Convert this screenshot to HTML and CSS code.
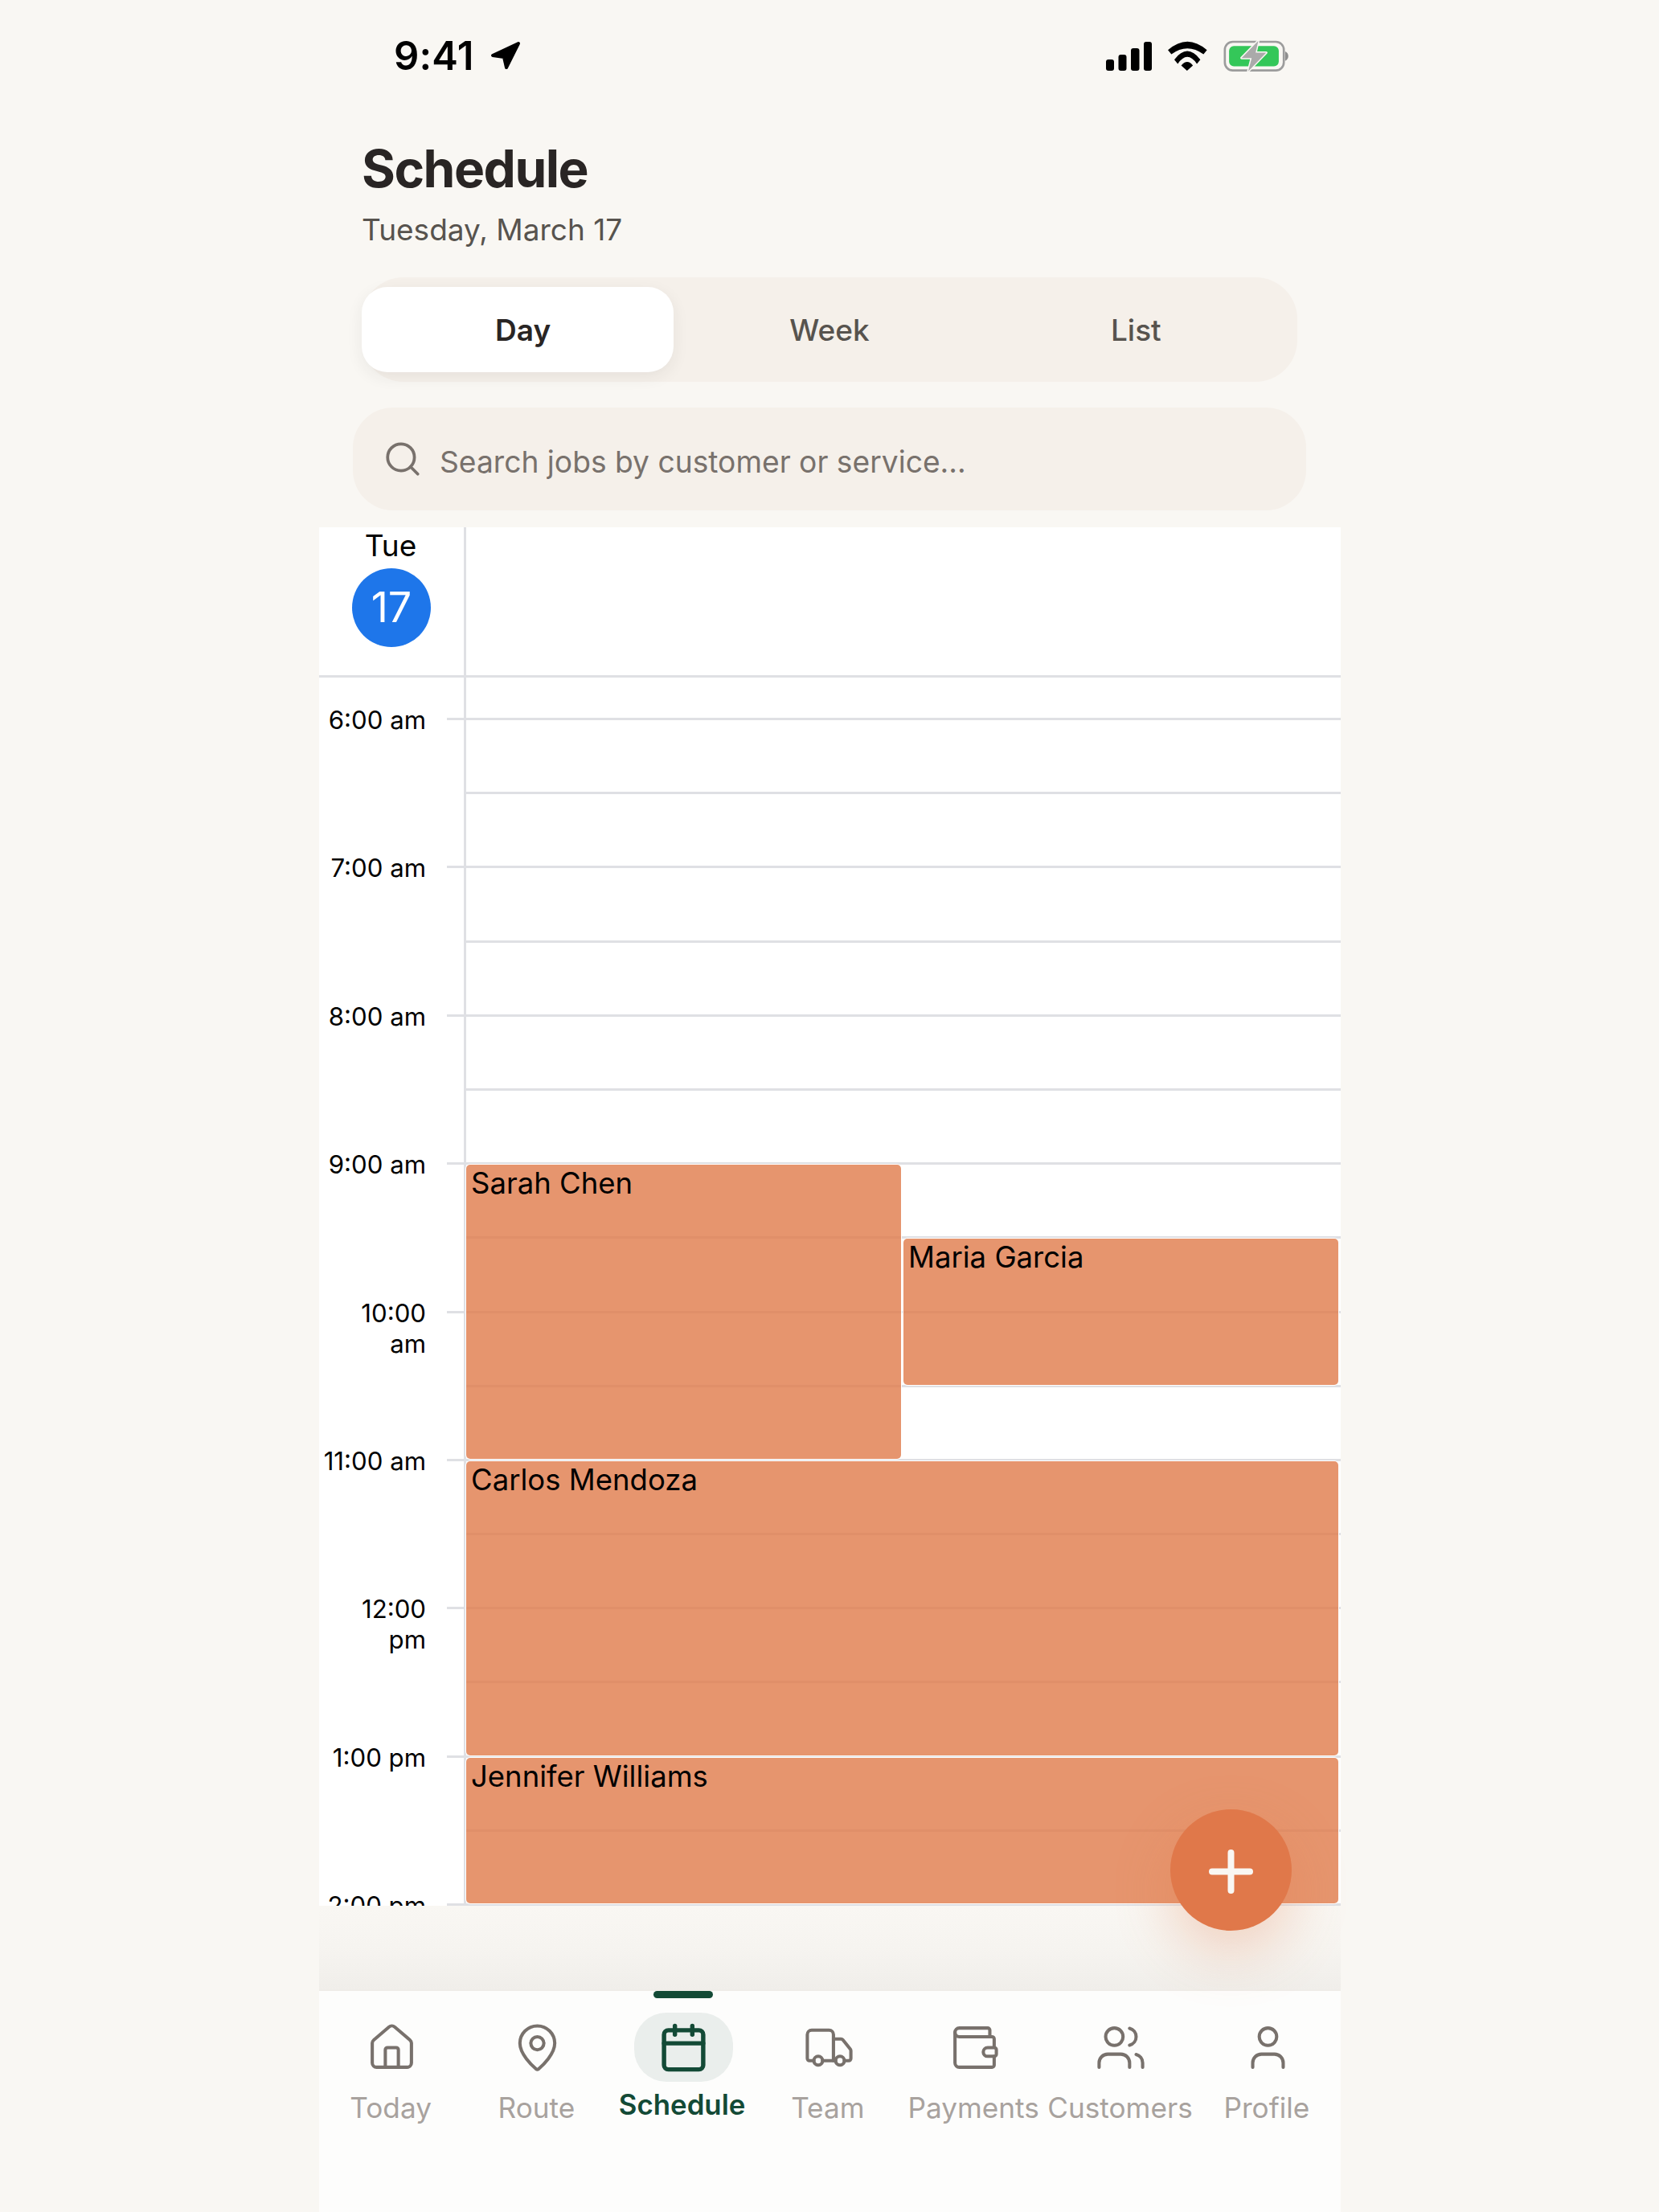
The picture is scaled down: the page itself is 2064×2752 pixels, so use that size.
FILE: index.html
```html
<!DOCTYPE html>
<html lang="en">
<head>
    <meta charset="UTF-8">
    <title>Schedule</title>
    <link rel="stylesheet" href="styles.css">
</head>
<body>
    <div class="phone">
        <div class="status-bar">
            <div class="status-left">
                <span class="clock">9:41</span>
                <svg class="arrow" viewBox="0 0 38 36"><path d="M35 3 3 18l14 2 3 13z"/></svg>
            </div>
            <div class="status-right">
                <svg class="signal" viewBox="0 0 57 36">
                    <rect x="0" y="22" width="10" height="14" rx="3"/>
                    <rect x="15.500" y="16" width="10" height="20" rx="3"/>
                    <rect x="31" y="8" width="10.500" height="28" rx="3"/>
                    <rect x="47" y="0" width="10" height="36" rx="3"/>
                </svg>
                <svg class="wifi" viewBox="338 90 148 112">
                    <path d="M338 124Q411 60 485 124L472 140Q411 96 351 140Z"/>
                    <path d="M362 160Q411 96 460 160L447 176Q411 124 375 176Z"/>
                    <path d="M388 182Q411 155 432 182L410 202Z"/>
                </svg>
                <svg class="battery" viewBox="545 88 245 118">
                    <rect class="battery-case" x="549" y="94" width="222" height="108" rx="30"/>
                    <rect class="battery-level" x="565" y="110" width="187" height="76" rx="18"/>
                    <path class="battery-nub" d="M776 130c8 3 12 10 12 18s-4 15-12 18z"/>
                    <path class="battery-bolt" d="M675 90 612 155h38l-13 50 68-70h-40z"/>
                </svg>
            </div>
        </div>

        <header class="page-head">
            <h1>Schedule</h1>
            <p>Tuesday, March 17</p>
        </header>

        <div class="view-tabs">
            <div class="tab-pill"></div>
            <div class="tab active">Day</div>
            <div class="tab">Week</div>
            <div class="tab">List</div>
        </div>

        <div class="search-box">
            <svg class="search-icon" viewBox="0 0 24 24"><circle cx="11" cy="11" r="8"/><path d="m21 21-4.300-4.300"/></svg>
            <span>Search jobs by customer or service...</span>
        </div>

        <div class="calendar">
            <div class="cal-head">
                <div class="day-cell">
                    <div class="day-name">Tue</div>
                    <div class="day-num">17</div>
                </div>
            </div>
            <div class="cal-body">
                <div class="vline"></div>

                <div class="lane first"></div>

                <div class="time r2"><span>6:00 am</span><i></i></div><div class="lane r2"></div>
                <div class="lane r3"></div>
                <div class="time r4"><span>7:00 am</span><i></i></div><div class="lane r4"></div>
                <div class="lane r5"></div>
                <div class="time r6"><span>8:00 am</span><i></i></div><div class="lane r6"></div>
                <div class="lane r7"></div>
                <div class="time r8"><span>9:00 am</span><i></i></div><div class="lane r8"></div>
                <div class="lane r9"></div>
                <div class="time r10"><span>10:00<br>am</span><i></i></div><div class="lane r10"></div>
                <div class="lane r11"></div>
                <div class="time r12"><span>11:00 am</span><i></i></div><div class="lane r12"></div>
                <div class="lane r13"></div>
                <div class="time r14"><span>12:00<br>pm</span><i></i></div><div class="lane r14"></div>
                <div class="lane r15"></div>
                <div class="time r16"><span>1:00 pm</span><i></i></div><div class="lane r16"></div>
                <div class="lane r17"></div>
                <div class="time r18"><span>2:00 pm</span><i></i></div><div class="lane r18"></div>

                <div class="event sarah">Sarah Chen</div>
                <div class="event maria">Maria Garcia</div>
                <div class="event carlos">Carlos Mendoza</div>
                <div class="event jennifer">Jennifer Williams</div>
            </div>
        </div>

        <div class="nav-fade"></div>

        <button class="fab">
            <svg viewBox="0 0 55 55"><path d="M27.500 4v47M4 27.500h47"/></svg>
        </button>

        <nav class="tabbar">
            <div class="nav-item">
                <div class="nav-icon">
                    <svg viewBox="0 0 24 24"><path d="M15 21v-8a1 1 0 0 0-1-1h-4a1 1 0 0 0-1 1v8"/><path d="M3 10a2 2 0 0 1 .709-1.528l7-5.999a2 2 0 0 1 2.582 0l7 5.999A2 2 0 0 1 21 10v9a2 2 0 0 1-2 2H5a2 2 0 0 1-2-2z"/></svg>
                </div>
                <span>Today</span>
            </div>
            <div class="nav-item">
                <div class="nav-icon">
                    <svg viewBox="0 0 24 24"><path d="M20 10c0 4.993-5.539 10.193-7.399 11.799a1 1 0 0 1-1.202 0C9.539 20.193 4 14.993 4 10a8 8 0 0 1 16 0"/><circle cx="12" cy="10" r="3"/></svg>
                </div>
                <span>Route</span>
            </div>
            <div class="nav-item active">
                <div class="nav-mark"></div>
                <div class="nav-icon">
                    <svg viewBox="0 0 24 24"><path d="M8 2v4"/><path d="M16 2v4"/><rect width="18" height="18" x="3" y="4" rx="2"/><path d="M3 10h18"/></svg>
                </div>
                <span>Schedule</span>
            </div>
            <div class="nav-item">
                <div class="nav-icon">
                    <svg viewBox="0 0 24 24"><path d="M14 18V6a2 2 0 0 0-2-2H4a2 2 0 0 0-2 2v11a1 1 0 0 0 1 1h2"/><path d="M15 18H9"/><path d="M19 18h2a1 1 0 0 0 1-1v-3.650a1 1 0 0 0-.22-.624l-3.480-4.350A1 1 0 0 0 17.520 8H14"/><circle cx="17" cy="18" r="2"/><circle cx="7" cy="18" r="2"/></svg>
                </div>
                <span>Team</span>
            </div>
            <div class="nav-item">
                <div class="nav-icon">
                    <svg viewBox="0 0 24 24"><path d="M19 7V4a1 1 0 0 0-1-1H5a2 2 0 0 0 0 4h15a1 1 0 0 1 1 1v4h-3a2 2 0 0 0 0 4h3a1 1 0 0 0 1-1v-2a1 1 0 0 0-1-1"/><path d="M3 5v14a2 2 0 0 0 2 2h15a1 1 0 0 0 1-1v-4"/></svg>
                </div>
                <span>Payments</span>
            </div>
            <div class="nav-item">
                <div class="nav-icon">
                    <svg viewBox="0 0 24 24"><path d="M16 21v-2a4 4 0 0 0-4-4H6a4 4 0 0 0-4 4v2"/><circle cx="9" cy="7" r="4"/><path d="M22 21v-2a4 4 0 0 0-3-3.870"/><path d="M16 3.130a4 4 0 0 1 0 7.750"/></svg>
                </div>
                <span>Customers</span>
            </div>
            <div class="nav-item">
                <div class="nav-icon">
                    <svg viewBox="0 0 24 24"><path d="M19 21v-2a4 4 0 0 0-4-4H9a4 4 0 0 0-4 4v2"/><circle cx="12" cy="7" r="4"/></svg>
                </div>
                <span>Profile</span>
            </div>
        </nav>
    </div>
</body>
</html>
```

FILE: styles.css
```css
* {
    box-sizing: border-box;
}
body {
    margin: 0;
    background-color: #f9f7f3;
    font-family: Inter, "Liberation Sans", sans-serif;
    color: #292524;
}
.phone {
    position: relative;
    width: 1271px;
    height: 2752px;
    margin-left: 397px;
}

/* status bar */
.status-bar {
    height: 130px;
    padding: 50px 64px 0 93px;
    display: flex;
    justify-content: space-between;
    align-items: flex-start;
}
.status-left {
    display: flex;
    align-items: center;
    gap: 20px;
    height: 38px;
}
.clock {
    font-size: 49px;
    font-weight: 600;
    color: #000;
    letter-spacing: 0.2px;
}
.arrow {
    width: 38px;
    height: 36px;
    fill: #000;
    stroke: #000;
    stroke-width: 4;
    stroke-linejoin: round;
}
.status-right {
    display: flex;
    align-items: center;
    gap: 20px;
}
.signal {
    width: 57px;
    height: 36px;
}
.wifi {
    width: 49px;
    height: 37px;
}
.battery {
    width: 82px;
    height: 39px;
}
.battery-case {
    fill: none;
    stroke: #9c9c9c;
    stroke-width: 8;
}
.battery-level {
    fill: #34c759;
}
.battery-nub {
    fill: #8e8e8e;
}
.battery-bolt {
    fill: #aaaaaa;
    stroke: #f9f7f3;
    stroke-width: 9;
    paint-order: stroke;
    stroke-linejoin: round;
}

/* heading */
.page-head {
    padding: 40px 0 0 53px;
}
.page-head h1 {
    margin: 0;
    font-size: 64px;
    line-height: 80px;
    font-weight: 700;
    letter-spacing: -1.500px;
}
.page-head p {
    margin: 11px 0 0;
    font-size: 37px;
    line-height: 50px;
    color: #57534e;
}

/* Day / Week / List */
.view-tabs {
    position: relative;
    display: flex;
    width: 1164px;
    height: 130px;
    margin: 34px 0 0 53px;
    padding: 0 10px;
    background-color: #f5f0ea;
    border-radius: 52px;
}
.tab-pill {
    position: absolute;
    left: 0;
    top: 12px;
    width: 388px;
    height: 106px;
    background-color: #fff;
    border-radius: 32px;
    box-shadow: 0 6px 20px rgba(41, 37, 36, 0.07);
}
.tab {
    position: relative;
    flex: 1;
    display: flex;
    align-items: center;
    justify-content: center;
    font-size: 37px;
    font-weight: 500;
    color: #57534e;
}
.tab.active {
    font-weight: 600;
    color: #292524;
}

.search-box {
    display: flex;
    align-items: center;
    gap: 21px;
    width: 1186px;
    height: 128px;
    margin: 32px 0 0 42px;
    padding: 0 0 0 37px;
    background-color: #f5f0ea;
    border-radius: 50px;
    font-size: 37.200px;
    color: #78716c;
}
.search-box span {
    margin-top: 7px;
}
.search-icon {
    width: 50px;
    height: 50px;
    fill: none;
    stroke: #78716c;
    stroke-width: 1.800;
    stroke-linecap: round;
    stroke-linejoin: round;
}

/* calendar */
.calendar {
    height: 1715px;
    margin-top: 21px;
    background-color: #fff;
    overflow: hidden;
    color: #000;
}
.cal-head {
    height: 187px;
    border-bottom: 3px solid #dfe0e4;
}
.day-cell {
    width: 183px;
    height: 184px;
    border-right: 3px solid #dfe0e4;
    padding: 1px 2px 0 0;
    text-align: center;
}
.day-name {
    font-size: 37px;
    line-height: 44px;
}
.day-num {
    width: 98px;
    height: 98px;
    margin: 6px 0 0 41px;
    border-radius: 50%;
    background-color: #1e76ea;
    color: #fff;
    font-size: 52px;
    line-height: 98px;
}
.cal-body {
    display: grid;
    grid-template-columns: 180px 3px 1fr 1fr 3px;
    grid-template-rows: 50px repeat(17, 92.200px);
}
.vline {
    grid-column: 2;
    grid-row: 1 / -1;
    background-color: #dfe0e4;
}
.lane {
    grid-column: 2 / -1;
    border-top: 3px solid #dfe0e4;
}
.lane.first {
    grid-row: 1;
    border-top: none;
}
.time {
    grid-column: 1;
    display: flex;
    justify-content: flex-end;
    align-items: flex-start;
    text-align: right;
    font-size: 31.200px;
    line-height: 38px;
}
.time span {
    margin: -16px 26px 0 0;
    white-space: nowrap;
}
.time i {
    width: 21px;
    border-top: 3px solid #dfe0e4;
}
.r2 { grid-row: 2; }
.r3 { grid-row: 3; }
.r4 { grid-row: 4; }
.r5 { grid-row: 5; }
.r6 { grid-row: 6; }
.r7 { grid-row: 7; }
.r8 { grid-row: 8; }
.r9 { grid-row: 9; }
.r10 { grid-row: 10; }
.r11 { grid-row: 11; }
.r12 { grid-row: 12; }
.r13 { grid-row: 13; }
.r14 { grid-row: 14; }
.r15 { grid-row: 15; }
.r16 { grid-row: 16; }
.r17 { grid-row: 17; }
.r18 { grid-row: 18; }

.event {
    z-index: 1;
    margin: 3px 0 0 0;
    padding: 1px 6px;
    background-color: rgba(224, 122, 74, 0.8);
    border-radius: 5px;
    box-shadow: 0 0 0 1px #fff;
    font-size: 36.500px;
    line-height: 44px;
}
.sarah {
    grid-column: 3;
    grid-row: 8 / 12;
    margin-right: 1.500px;
}
.maria {
    grid-column: 4;
    grid-row: 9 / 11;
    margin-left: 1.500px;
}
.carlos {
    grid-column: 3 / 5;
    grid-row: 12 / 16;
}
.jennifer {
    grid-column: 3 / 5;
    grid-row: 16 / 18;
}

/* bottom */
.nav-fade {
    height: 104px;
    background: linear-gradient(#f9f7f3, #f6f4f0 50%, #f0eeea);
}
.fab {
    position: absolute;
    z-index: 5;
    left: 1059px;
    top: 2251px;
    width: 151px;
    height: 151px;
    padding: 0;
    border: none;
    border-radius: 50%;
    background-color: #e0784a;
    box-shadow: 0 26px 70px rgba(224, 122, 74, 0.3);
}
.fab svg {
    display: block;
    width: 55px;
    height: 55px;
    margin: 3px auto 0;
    fill: none;
    stroke: #f9f7f3;
    stroke-width: 8;
    stroke-linecap: round;
}
.tabbar {
    display: grid;
    grid-template-columns: repeat(7, 1fr);
    height: 277px;
    background-color: #fdfdfc;
    border-top: 2px solid #efece8;
}
.nav-item {
    position: relative;
    display: flex;
    flex-direction: column;
    align-items: center;
    padding-top: 34px;
    font-size: 35.200px;
    color: #a8a29e;
    white-space: nowrap;
}
.nav-item span {
    margin-right: 3px;
}
.nav-icon {
    display: flex;
    align-items: center;
    justify-content: center;
    width: 123px;
    height: 72px;
    margin-bottom: 18px;
}
.nav-icon svg {
    width: 65px;
    height: 65px;
    fill: none;
    stroke: #78716c;
    stroke-width: 1.500;
    stroke-linecap: round;
    stroke-linejoin: round;
}
.nav-mark {
    position: absolute;
    top: 0;
    left: 54px;
    width: 74px;
    height: 9px;
    border-radius: 5px;
    background-color: #134a36;
}
.nav-item.active {
    color: #134a36;
    font-weight: 600;
    font-size: 34.800px;
}
.nav-item.active .nav-icon {
    height: 86px;
    margin: -7px 0 7px;
    background-color: #eaeeec;
    border-radius: 40px;
}
.nav-item.active svg {
    stroke: #134a36;
    stroke-width: 2;
}
```
